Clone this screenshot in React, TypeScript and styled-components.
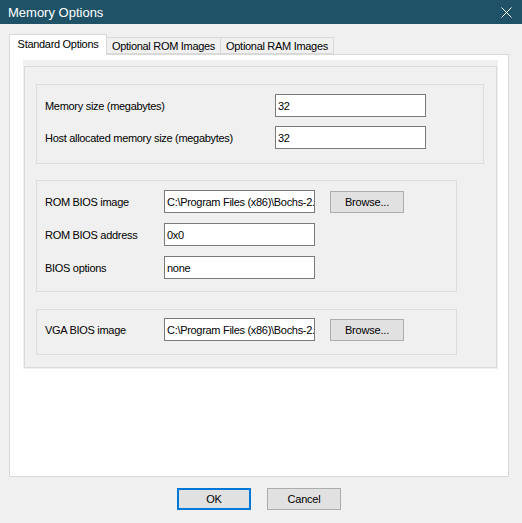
import styled, { createGlobalStyle } from 'styled-components';

const GlobalStyle = createGlobalStyle`
  html, body {
    margin: 0;
    padding: 0;
    background: #f0f0f0;
  }
  body {
    font-family: "Liberation Sans", Arial, sans-serif;
    font-size: 11px;
    color: #000;
  }
`;

const Window = styled.div`
  width: 522px;
  height: 523px;
  background: #f0f0f0;
  display: flex;
  flex-direction: column;
  overflow: hidden;
`;

const TitleBar = styled.div`
  height: 24px;
  background: #1f5266;
  display: flex;
  align-items: center;
  justify-content: space-between;
  padding: 0 10px 0 8px;
  color: #fff;
  font-size: 13px;
  flex-shrink: 0;
`;

const Body = styled.div`
  padding: 10px 13px 0 9px;
  display: flex;
  flex-direction: column;
`;

const TabStrip = styled.div`
  display: flex;
  align-items: flex-end;
  height: 20px;
  position: relative;
  z-index: 1;
`;

const Tab = styled.div<{ $active?: boolean; $w: number }>`
  box-sizing: border-box;
  width: ${(p) => p.$w}px;
  height: ${(p) => (p.$active ? 21 : 17)}px;
  margin-bottom: ${(p) => (p.$active ? -1 : 0)}px;
  margin-left: -1px;
  &:first-child { margin-left: 0; }
  background: ${(p) => (p.$active ? '#fff' : '#f0f0f0')};
  border: 1px solid #d9d9d9;
  border-bottom: ${(p) => (p.$active ? 'none' : '1px solid #d9d9d9')};
  display: flex;
  align-items: center;
  justify-content: center;
  padding-bottom: ${(p) => (p.$active ? 3 : 0)}px;
  letter-spacing: -0.3px;
  white-space: nowrap;
`;

const TabPage = styled.div`
  box-sizing: border-box;
  width: 500px;
  height: 423px;
  background: #fff;
  border: 1px solid #d9d9d9;
  padding: 5px 10px 0 13px;
`;

const Panel = styled.div`
  box-sizing: border-box;
  width: 475px;
  height: 309px;
  background: #f0f0f0;
  padding: 6px 1px 1px 1px;
`;

const PanelFrame = styled.div`
  box-sizing: border-box;
  height: 100%;
  border: 1px solid #dadada;
  padding: 17px 0 0 11px;
  display: flex;
  flex-direction: column;
`;

const Group = styled.div<{ $w: number; $mt?: number; $pt: number; $pb: number; $gap?: number }>`
  box-sizing: border-box;
  width: ${(p) => p.$w}px;
  margin-top: ${(p) => p.$mt ?? 0}px;
  border: 1px solid #dcdcdc;
  padding: ${(p) => p.$pt}px 0 ${(p) => p.$pb}px 8px;
  display: flex;
  flex-direction: column;
  gap: ${(p) => p.$gap ?? 9}px;
`;

const Row = styled.div<{ $labelW: number }>`
  display: grid;
  grid-template-columns: ${(p) => p.$labelW}px 151px 74px;
  column-gap: 15px;
  align-items: center;
`;

const Label = styled.span`
  letter-spacing: -0.3px;
  white-space: nowrap;
`;

const Field = styled.div`
  box-sizing: border-box;
  height: 23px;
  border: 1px solid #7a7a7a;
  background: #fff;
  padding: 0 2px;
  display: flex;
  align-items: center;
  white-space: nowrap;
  overflow: hidden;
  letter-spacing: -0.3px;
`;

const Button = styled.div<{ $default?: boolean }>`
  box-sizing: border-box;
  width: 74px;
  height: 22px;
  background: #e1e1e1;
  border: ${(p) => (p.$default ? '2px solid #0078d7' : '1px solid #adadad')};
  display: flex;
  align-items: center;
  justify-content: center;
  letter-spacing: -0.2px;
`;

const Footer = styled.div`
  display: flex;
  justify-content: center;
  gap: 16px;
  padding: 11px 0 0 0;
`;

const CloseIcon = () => (
  <svg width="11" height="11" viewBox="0 0 11 11" style={{ marginTop: 1 }}>
    <path d="M0.5 0.5 L10.5 10.5 M10.5 0.5 L0.5 10.5" stroke="#fff" strokeWidth="1" fill="none" />
  </svg>
);

export default function App() {
  return (
    <Window>
      <GlobalStyle />
      <TitleBar>
        <span>Memory Options</span>
        <CloseIcon />
      </TitleBar>
      <Body>
        <TabStrip>
          <Tab $active $w={98}>Standard Options</Tab>
          <Tab $w={115}>Optional ROM Images</Tab>
          <Tab $w={114}>Optional RAM Images</Tab>
        </TabStrip>
        <TabPage>
          <Panel>
            <PanelFrame>
              <Group $w={448} $pt={9} $pb={14}>
                <Row $labelW={215}>
                  <Label>Memory size (megabytes)</Label>
                  <Field>32</Field>
                </Row>
                <Row $labelW={215}>
                  <Label>Host allocated memory size (megabytes)</Label>
                  <Field>32</Field>
                </Row>
              </Group>
              <Group $w={421} $mt={16} $pt={9} $pb={12} $gap={10}>
                <Row $labelW={104}>
                  <Label>ROM BIOS image</Label>
                  <Field>C:\Program Files (x86)\Bochs-2.6.11</Field>
                  <Button>Browse...</Button>
                </Row>
                <Row $labelW={104}>
                  <Label>ROM BIOS address</Label>
                  <Field>0x0</Field>
                </Row>
                <Row $labelW={104}>
                  <Label>BIOS options</Label>
                  <Field>none</Field>
                </Row>
              </Group>
              <Group $w={421} $mt={17} $pt={8} $pb={13}>
                <Row $labelW={104}>
                  <Label>VGA BIOS image</Label>
                  <Field>C:\Program Files (x86)\Bochs-2.6.11</Field>
                  <Button>Browse...</Button>
                </Row>
              </Group>
            </PanelFrame>
          </Panel>
        </TabPage>
        <Footer>
          <Button $default>OK</Button>
          <Button>Cancel</Button>
        </Footer>
      </Body>
    </Window>
  );
}
